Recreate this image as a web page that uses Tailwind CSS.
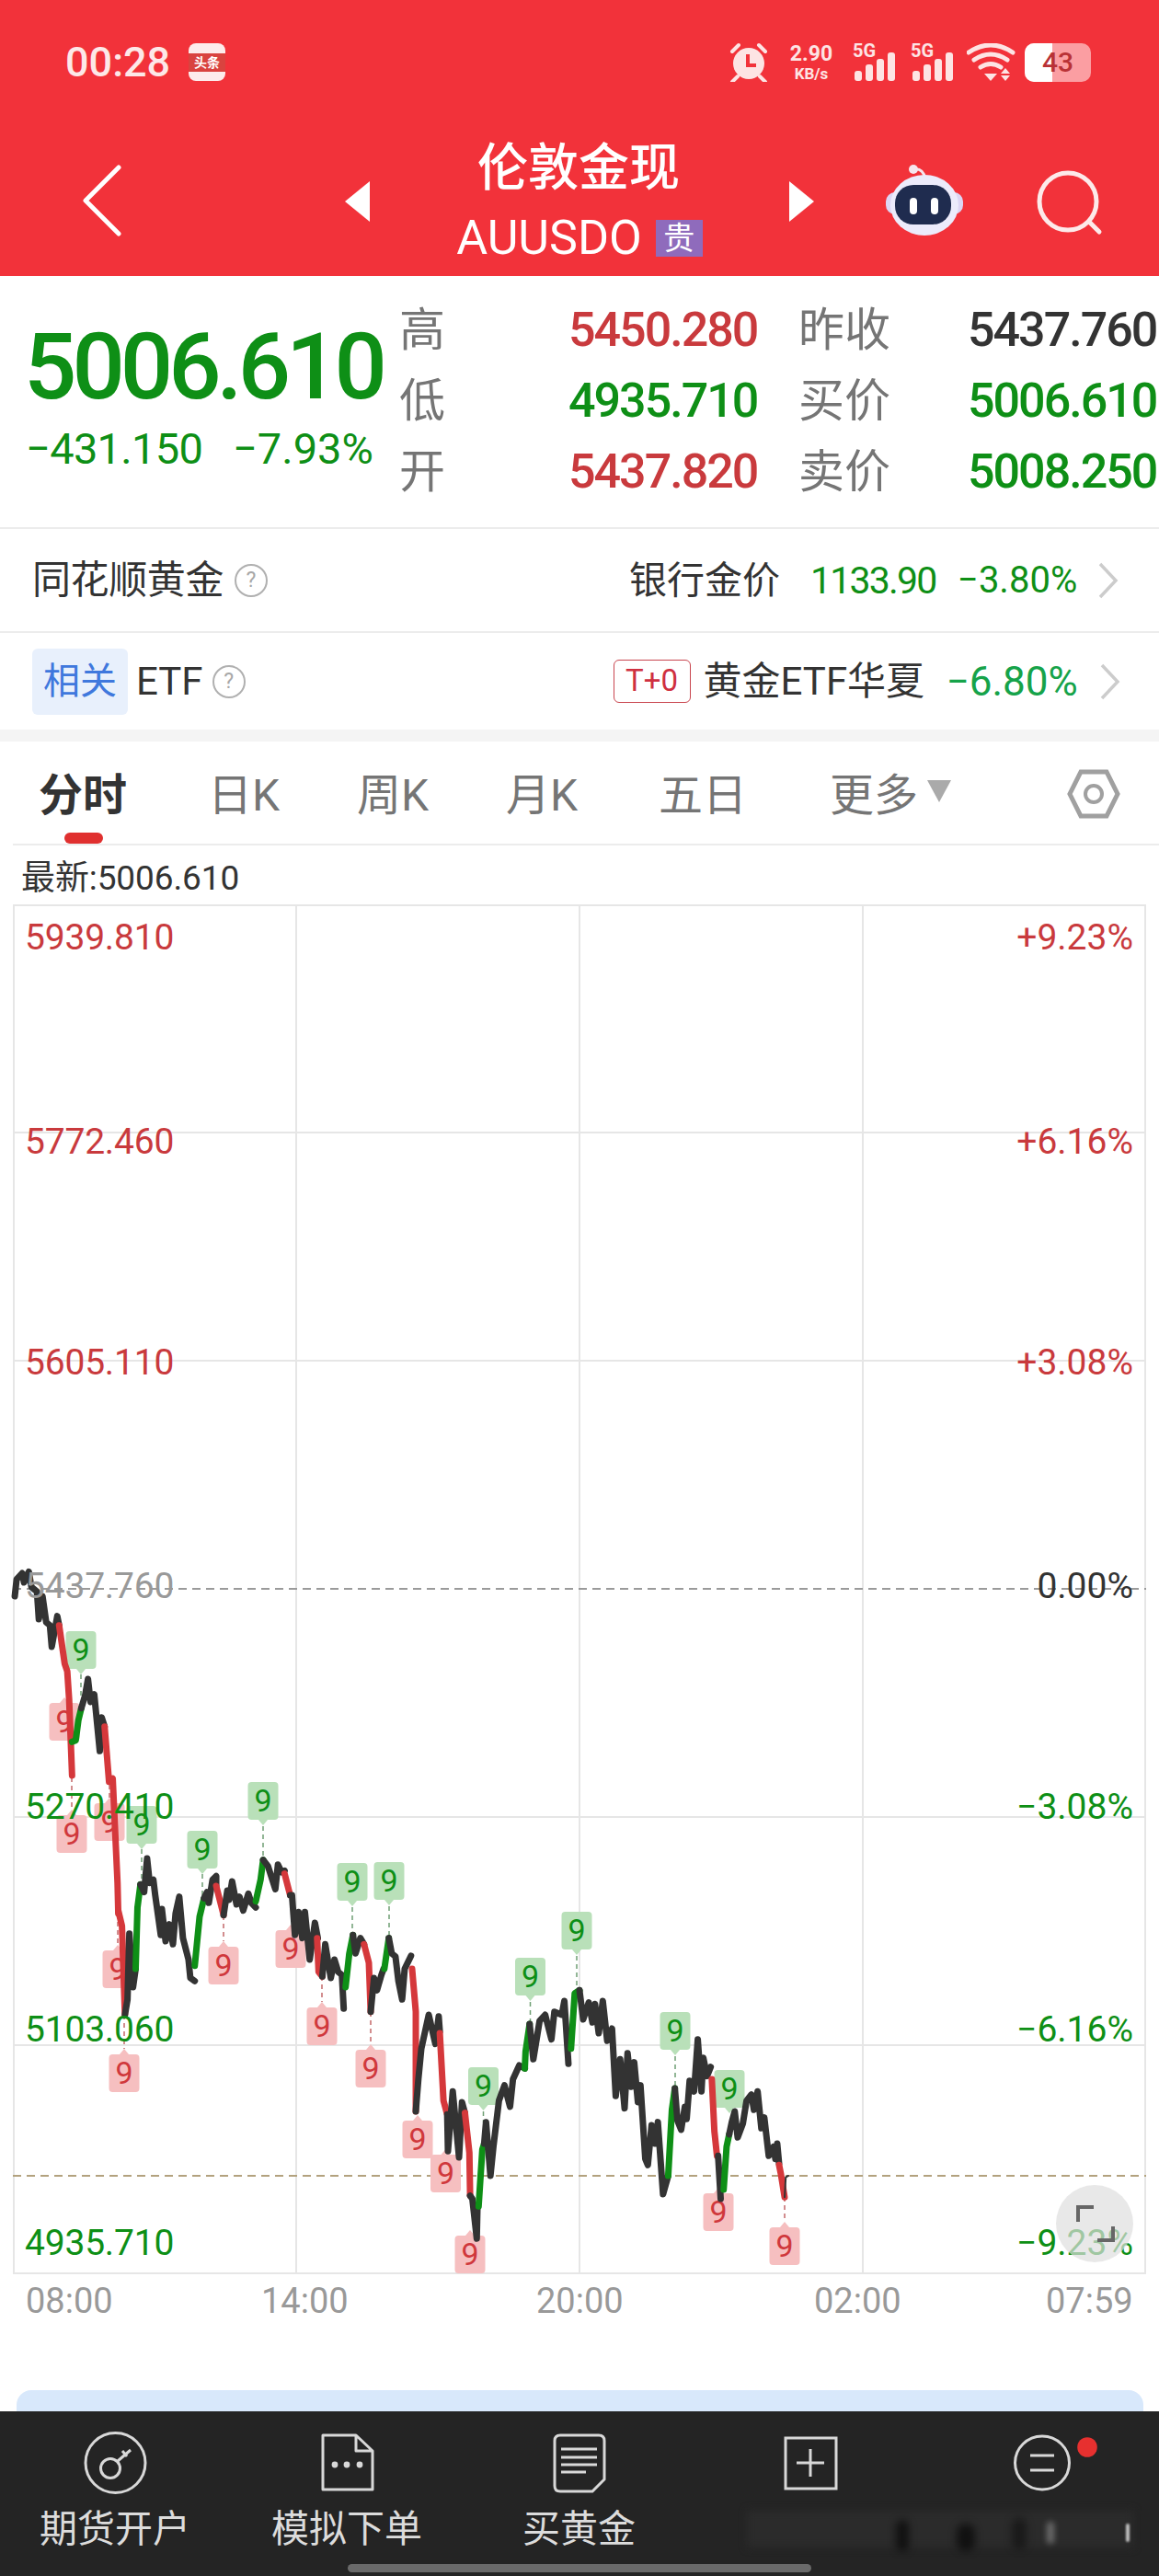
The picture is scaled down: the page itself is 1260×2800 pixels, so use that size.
<!DOCTYPE html>
<html lang="zh">
<head>
<meta charset="utf-8">
<script src="https://cdn.jsdelivr.net/npm/@tailwindcss/browser@4"></script>
<title>伦敦金现</title>
</head>
<body class="bg-white">
<div class="relative w-[1260px] h-[2800px] overflow-hidden bg-white font-['Roboto','Noto_Sans_CJK_SC',sans-serif]">

  <!-- red header -->
  <header class="h-[300px] bg-[#f2323a] text-white">
    <!-- status bar -->
    <div class="flex items-center h-[43px] relative top-[46px] pl-[71px]">
      <span class="w-[134px] text-[45px] leading-[43px] text-[#fde8e8] font-medium">00:28</span>
      <span class="flex flex-col w-[40px] h-[41px] rounded-[8px] bg-[#fdecec] justify-center overflow-hidden">
        <span class="h-[20px] bg-[#d9433f] text-[14px] leading-[20px] text-center text-white font-bold">头条</span>
      </span>
      <svg class="ml-[548px] w-[42px] h-[43px]" viewBox="0 0 42 43" fill="#fde4e4">
        <circle cx="21" cy="23" r="17"/><path d="M3 10 L10 3 M32 3 L39 10 M9 37 L3 43 M33 37 L39 43" stroke="#fde4e4" stroke-width="4" stroke-linecap="round"/>
        <path d="M20 13 V25 H29" fill="none" stroke="#f2323a" stroke-width="4"/>
      </svg>
      <span class="ml-[22px] w-[50px] flex flex-col items-center text-[#fde4e4] font-bold">
        <span class="text-[23px] leading-[24px]">2.90</span>
        <span class="text-[17px] leading-[18px]">KB/s</span>
      </span>
      <span class="relative ml-[20px] w-[47px] h-[40px]">
        <span class="absolute left-0 -top-[3px] text-[20px] leading-[20px] font-bold text-[#fde4e4]">5G</span>
        <svg class="absolute left-0 top-0" width="47" height="40" viewBox="0 0 47 40" fill="#fde4e4"><rect x="2" y="29" width="8" height="11" rx="3"/><rect x="14" y="22" width="8" height="18" rx="3"/><rect x="26" y="16" width="8" height="24" rx="3"/><rect x="38" y="9" width="8" height="31" rx="3"/></svg>
      </span>
      <span class="relative ml-[16px] w-[47px] h-[40px]">
        <span class="absolute left-0 -top-[3px] text-[20px] leading-[20px] font-bold text-[#fde4e4]">5G</span>
        <svg class="absolute left-0 top-0" width="47" height="40" viewBox="0 0 47 40" fill="#fde4e4"><rect x="2" y="29" width="8" height="11" rx="3"/><rect x="14" y="22" width="8" height="18" rx="3"/><rect x="26" y="16" width="8" height="24" rx="3"/><rect x="38" y="9" width="8" height="31" rx="3"/></svg>
      </span>
      <svg class="ml-[14px] w-[53px] h-[42px]" viewBox="0 0 53 42" fill="none" stroke="#fde4e4" stroke-linecap="round">
        <path d="M2 10 Q26 -6 50 10" stroke-width="5"/><path d="M8 18 Q26 6 44 18" stroke-width="5"/><path d="M15 26 Q26 19 37 26" stroke-width="5"/>
        <path d="M19 33 H33 L26 41Z" fill="#fde4e4" stroke="none"/><path d="M42 27 L47 33 H37Z M37 35 H47 L42 41Z" fill="#fde4e4" stroke="none"/>
      </svg>
      <span class="relative ml-[10px] w-[72px] h-[42px] rounded-[10px] bg-[#fb9ea2] overflow-hidden">
        <span class="absolute left-0 top-0 w-[30px] h-[42px] bg-white"></span>
        <span class="absolute inset-0 flex items-center justify-center text-[30px] leading-[42px] font-medium text-[#b93236]">43</span>
      </span>
    </div>
    <!-- title bar -->
    <div class="relative flex items-start h-[165px] mt-[71px] pt-[36px]">
      <svg class="absolute left-[88px] top-[64px] w-[46px] h-[80px]" viewBox="0 0 46 80" fill="none" stroke="#fff" stroke-width="5" stroke-linecap="round" stroke-linejoin="round"><path d="M41 4 L5 40 L41 76"/></svg>
      <svg class="absolute left-[375px] top-[83px] w-[27px] h-[44px]" viewBox="0 0 27 44" fill="#fff"><path d="M27 0 V44 L0 22Z"/></svg>
      <svg class="absolute left-[858px] top-[83px] w-[27px] h-[44px]" viewBox="0 0 27 44" fill="#fff"><path d="M0 0 V44 L27 22Z"/></svg>
      <div class="w-full flex flex-col items-center">
        <span class="text-[55px] leading-[64px] font-medium -ml-[2px]">伦敦金现</span>
        <span class="flex items-center mt-[25px] h-[40px]">
          <span class="text-[52px] leading-[40px]">AUUSDO</span>
          <span class="ml-[15px] w-[51px] h-[40px] bg-[#8f6bbc] text-center text-[34px] leading-[40px]">贵</span>
        </span>
      </div>
      <svg class="absolute left-[960px] top-[62px] w-[90px] h-[90px]" viewBox="960 172 90 90">
        <path d="M993 180 Q1003 178 1006 190" fill="none" stroke="#f6e6ee" stroke-width="3"/>
        <circle cx="993" cy="180" r="5" fill="#f6e6ee"/>
        <rect x="963" y="205" width="84" height="24" rx="10" fill="#dcd6f4"/>
        <ellipse cx="1005" cy="219" rx="37" ry="33" fill="#ecebfb"/>
        <rect x="973" y="197" width="61" height="43" rx="20" fill="#1f2c4f"/>
        <rect x="989" y="211" width="8" height="18" rx="4" fill="#fff"/>
        <rect x="1012" y="211" width="8" height="18" rx="4" fill="#fff"/>
      </svg>
      <svg class="absolute left-[1120px] top-[64px] w-[84px] h-[84px]" viewBox="1120 174 84 84" fill="none" stroke="#fdeaea" stroke-width="5" stroke-linecap="round"><circle cx="1161" cy="215" r="31"/><path d="M1185 238 L1195 248"/></svg>
    </div>
  </header>

  <!-- quote -->
  <section class="flex h-[273px] pt-[20px]">
    <div class="w-[434px] pl-[26px] pt-[37px] text-[#0e8f16]">
      <div class="text-[101px] leading-[84px] font-medium tracking-[-5px] whitespace-nowrap">5006.610</div>
      <div class="flex mt-[24px] pl-[2px] text-[47px] leading-[46px]">
        <span class="w-[225px] tracking-[-0.7px]">−431.150</span><span>−7.93%</span>
      </div>
    </div>
    <div class="grid grid-cols-[184px_250px_184px_207px] grid-rows-[77px_77px_77px] items-center text-[#757575] text-[50px] leading-[60px]">
      <span>高</span><span class="text-[52px] font-medium text-[#c93a3d] tracking-[-2px]">5450.280</span><span>昨收</span><span class="text-[52px] font-medium text-[#333333] tracking-[-2px]">5437.760</span>
      <span>低</span><span class="text-[52px] font-medium text-[#0e8f16] tracking-[-2px]">4935.710</span><span>买价</span><span class="text-[52px] font-medium text-[#0e8f16] tracking-[-2px]">5006.610</span>
      <span>开</span><span class="text-[52px] font-medium text-[#c93a3d] tracking-[-2px]">5437.820</span><span>卖价</span><span class="text-[52px] font-medium text-[#0e8f16] tracking-[-2px]">5008.250</span>
    </div>
  </section>

  <!-- gold row -->
  <div class="flex items-center h-[113px] pl-[35px] border-t-2 border-[#ececec] text-[#333333]">
    <span class="text-[42px] leading-[50px] tracking-[-0.4px]">同花顺黄金</span>
    <span class="ml-[12px] w-[36px] h-[36px] rounded-full border-2 border-[#b0b0b0] text-[#a8a8a8] text-[23px] leading-[32px] text-center">?</span>
    <span class="ml-[393px] text-[41px] leading-[50px]">银行金价</span>
    <span class="ml-[33px] w-[160px] text-[41px] leading-[50px] text-[#0e8f16] tracking-[-1.8px]">1133.90</span>
    <span class="w-[129px] text-[40px] leading-[50px] text-[#0e8f16] whitespace-nowrap">−3.80%</span>
    <svg class="ml-[23px] w-[24px] h-[40px]" viewBox="0 0 24 40" fill="none" stroke="#cccccc" stroke-width="3.5"><path d="M3 2 L20 20 L3 38"/></svg>
  </div>

  <!-- ETF row -->
  <div class="relative flex items-center h-[107px] pl-[35px] border-t-2 border-[#ececec] text-[#333333]">
    <span class="w-[104px] h-[72px] rounded-[6px] bg-[#e8f0fc] text-[#3f78dd] text-[40px] leading-[72px] text-center">相关</span>
    <span class="ml-[9px] text-[42px] leading-[50px]">ETF</span>
    <span class="ml-[10px] w-[36px] h-[36px] rounded-full border-2 border-[#b0b0b0] text-[#a8a8a8] text-[23px] leading-[32px] text-center">?</span>
    <span class="ml-[400px] w-[84px] h-[47px] rounded-[6px] border border-[#c9464f] text-[#cf3040] text-[33px] leading-[44px] text-center">T+0</span>
    <span class="ml-[14px] w-[264px] text-[42px] leading-[50px] whitespace-nowrap">黄金ETF华夏</span>
    <span class="w-[142px] text-[44px] leading-[50px] text-[#16a34a] whitespace-nowrap">−6.80%</span>
    <svg class="ml-[24px] w-[24px] h-[40px]" viewBox="0 0 24 40" fill="none" stroke="#cccccc" stroke-width="3.5"><path d="M3 2 L20 20 L3 38"/></svg>
  </div>

  <div class="h-[13px] bg-[#f4f4f4]"></div>

  <!-- tabs -->
  <nav class="relative flex items-center h-[113px] pt-[6px] ml-[14px] pl-[28px] border-b-2 border-[#ececec] text-[#757575] text-[48px] leading-[56px]">
    <span class="w-[184px] font-bold text-[#333333]">分时</span>
    <span class="w-[162px]">日K</span>
    <span class="w-[162px]">周K</span>
    <span class="w-[166px]">月K</span>
    <span class="w-[186px]">五日</span>
    <span class="w-[106px]">更多</span>
    <svg class="w-[26px] h-[24px] -mt-[10px]" viewBox="0 0 26 24" fill="#aaaaaa"><path d="M0 0 H26 L13 24Z"/></svg>
    <svg class="ml-[126px] w-[58px] h-[54px] -mt-[4px]" viewBox="0 0 58 54" fill="none" stroke="#a0a0a0" stroke-width="5"><path d="M15 3 H43 L55 27 L43 51 H15 L3 27Z"/><circle cx="29" cy="27" r="9" stroke-width="4"/></svg>
    <span class="absolute left-[56px] bottom-0 w-[42px] h-[12px] rounded-full bg-[#e0302f]"></span>
  </nav>

  <div class="h-[64px] pl-[23px] pt-[14px] text-[#333333] text-[37px] leading-[44px] tracking-[-0.1px]">最新:5006.610</div>

  <!-- chart -->
  <section class="relative ml-[14px] w-[1232px] h-[1489px]">
    <svg class="absolute inset-0 overflow-visible" width="1232" height="1489" viewBox="14 983 1232 1489" fill="none">
      <defs>
        <path id="gb" d="M-12.5 0 H12.5 Q16.5 0 16.5 4 V37 Q16.5 41 12.5 41 H5 L0 47 L-5 41 H-12.5 Q-16.5 41 -16.5 37 V4 Q-16.5 0 -12.5 0Z" fill="#b9e0b9"/>
        <path id="rb" d="M0 0 L5 6 H12.5 Q16.5 6 16.5 10 V43 Q16.5 47 12.5 47 H-12.5 Q-16.5 47 -16.5 43 V10 Q-16.5 6 -12.5 6 H-5Z" fill="#f6bfc0"/>
      </defs>
      <g stroke="#e6e6e6" stroke-width="2">
        <rect x="15" y="984" width="1230" height="1487"/>
        <path d="M322 983 V2472 M630 983 V2472 M938 983 V2472 M14 1231 H1246 M14 1479 H1246 M14 1975 H1246 M14 2223 H1246"/>
      </g>
      <path d="M14 1727 H1246" stroke="#9a9a9a" stroke-width="2" stroke-dasharray="9 6"/>
      <path d="M14 2365 H1246" stroke="#b3a27e" stroke-width="2" stroke-dasharray="9 6"/>

      <!-- stems -->
      <g stroke="#6f9f74" stroke-width="1.5" stroke-dasharray="5 4">
        <path d="M88 1820 V1845 M154 2010 V2047 M220 2037 V2063 M286 1985 V2022 M383 2073 V2103 M423 2072 V2107 M525.5 2295 V2307 M576.5 2176 V2200 M627 2126 V2163 M734 2235 V2270"/>
      </g>
      <g stroke="#c4686a" stroke-width="1.5" stroke-dasharray="5 4">
        <path d="M78 1932 V1967 M119 1940 V1954 M128 2080 V2114 M135 2190 V2227 M243 2082 V2110 M350 2148 V2176 M403 2187 V2222 M853 2388 V2415"/>
      </g>

      <!-- red badges -->
      <g class="font-['Roboto',sans-serif]" font-size="34" text-anchor="middle">
        <g transform="translate(70,1845)"><use href="#rb"/><text y="38" fill="#d0383c">9</text></g>
        <g transform="translate(78,1967)"><use href="#rb"/><text y="38" fill="#d0383c">9</text></g>
        <g transform="translate(119,1954)"><use href="#rb"/><text y="38" fill="#d0383c">9</text></g>
        <g transform="translate(128,2114)"><use href="#rb"/><text y="38" fill="#d0383c">9</text></g>
        <g transform="translate(135,2227)"><use href="#rb"/><text y="38" fill="#d0383c">9</text></g>
        <g transform="translate(243,2110)"><use href="#rb"/><text y="38" fill="#d0383c">9</text></g>
        <g transform="translate(316,2092)"><use href="#rb"/><text y="38" fill="#d0383c">9</text></g>
        <g transform="translate(350,2176)"><use href="#rb"/><text y="38" fill="#d0383c">9</text></g>
        <g transform="translate(403,2222)"><use href="#rb"/><text y="38" fill="#d0383c">9</text></g>
        <g transform="translate(454,2299)"><use href="#rb"/><text y="38" fill="#d0383c">9</text></g>
        <g transform="translate(484.5,2336)"><use href="#rb"/><text y="38" fill="#d0383c">9</text></g>
        <g transform="translate(511,2424)"><use href="#rb"/><text y="38" fill="#d0383c">9</text></g>
        <g transform="translate(781,2378)"><use href="#rb"/><text y="38" fill="#d0383c">9</text></g>
        <g transform="translate(853,2415)"><use href="#rb"/><text y="38" fill="#d0383c">9</text></g>
        <!-- green badges -->
        <g transform="translate(88,1773)"><use href="#gb"/><text y="32" fill="#0e8f16">9</text></g>
        <g transform="translate(154,1963)"><use href="#gb"/><text y="32" fill="#0e8f16">9</text></g>
        <g transform="translate(220,1990)"><use href="#gb"/><text y="32" fill="#0e8f16">9</text></g>
        <g transform="translate(286,1937)"><use href="#gb"/><text y="32" fill="#0e8f16">9</text></g>
        <g transform="translate(383,2025)"><use href="#gb"/><text y="32" fill="#0e8f16">9</text></g>
        <g transform="translate(423,2024)"><use href="#gb"/><text y="32" fill="#0e8f16">9</text></g>
        <g transform="translate(525.5,2247)"><use href="#gb"/><text y="32" fill="#0e8f16">9</text></g>
        <g transform="translate(576.5,2128)"><use href="#gb"/><text y="32" fill="#0e8f16">9</text></g>
        <g transform="translate(627,2078)"><use href="#gb"/><text y="32" fill="#0e8f16">9</text></g>
        <g transform="translate(734,2187)"><use href="#gb"/><text y="32" fill="#0e8f16">9</text></g>
        <g transform="translate(793,2250)"><use href="#gb"/><text y="32" fill="#0e8f16">9</text></g>
      </g>

      <!-- price line -->
      <g fill="none" stroke-width="7" stroke-linejoin="round" stroke-linecap="round">
        <g transform="translate(0,1680) scale(0.4018,0.3333)">
          <polyline vector-effect="non-scaling-stroke" stroke="#333333" points="40,165 45,110 60,90 65,120 78,85 85,135 100,150 105,240 115,165 125,250 135,260 140,330 155,230 160,260"/>
          <polyline vector-effect="non-scaling-stroke" stroke="#d5383b" points="160,260 175,385 182,410 187,500 195,750"/>
          <polyline vector-effect="non-scaling-stroke" stroke="#0e8f16" points="195,640 205,635 212,570 220,530"/>
          <polyline vector-effect="non-scaling-stroke" stroke="#333333" points="220,530 230,490 238,435 245,510 255,485 270,670 275,560 283,590"/>
          <polyline vector-effect="non-scaling-stroke" stroke="#d5383b" points="283,590 295,770 305,760 318,1100 320,1200"/>
        </g>
        <g transform="translate(0,2000) scale(0.4018,0.3333)">
          <polyline vector-effect="non-scaling-stroke" stroke="#d5383b" points="320,230 330,280 338,570"/>
          <polyline vector-effect="non-scaling-stroke" stroke="#333333" points="338,570 345,520 350,305 360,480 367,420"/>
          <polyline vector-effect="non-scaling-stroke" stroke="#0e8f16" points="367,420 372,220 380,145"/>
          <polyline vector-effect="non-scaling-stroke" stroke="#333333" points="380,145 390,170 398,60 405,140 415,130 420,180 435,310 438,225 448,330 458,275 468,340 475,240 485,185 495,320 510,390 515,450 527,460"/>
          <polyline vector-effect="non-scaling-stroke" stroke="#0e8f16" points="527,410 540,250 552,190"/>
          <polyline vector-effect="non-scaling-stroke" stroke="#333333" points="552,190 560,170 565,205 575,130 585,118 585,150"/>
          <polyline vector-effect="non-scaling-stroke" stroke="#d5383b" points="585,150 605,245"/>
          <polyline vector-effect="non-scaling-stroke" stroke="#333333" points="605,245 615,165 620,195 628,135 640,210 648,185 658,230 672,175 680,205 692,220"/>
          <polyline vector-effect="non-scaling-stroke" stroke="#0e8f16" points="692,200 705,130 712,65"/>
          <polyline vector-effect="non-scaling-stroke" stroke="#333333" points="712,65 725,85 745,160 752,80 762,105 770,100"/>
          <polyline vector-effect="non-scaling-stroke" stroke="#d5383b" points="770,110 785,180"/>
          <polyline vector-effect="non-scaling-stroke" stroke="#333333" points="785,180 790,180 798,310 808,235 818,320 825,235 838,390 852,270 860,320"/>
          <polyline vector-effect="non-scaling-stroke" stroke="#d5383b" points="858,320 862,430 872,445"/>
          <polyline vector-effect="non-scaling-stroke" stroke="#333333" points="872,445 880,340 895,450 905,390 915,430 925,440 930,550"/>
          <polyline vector-effect="non-scaling-stroke" stroke="#0e8f16" points="935,480 945,370 955,310"/>
          <polyline vector-effect="non-scaling-stroke" stroke="#333333" points="955,310 962,370 975,320 985,340"/>
          <polyline vector-effect="non-scaling-stroke" stroke="#d5383b" points="985,340 998,400 1003,560"/>
          <polyline vector-effect="non-scaling-stroke" stroke="#333333" points="1003,560 1012,450 1020,490 1032,440 1038,420"/>
          <polyline vector-effect="non-scaling-stroke" stroke="#0e8f16" points="1040,420 1052,320"/>
          <polyline vector-effect="non-scaling-stroke" stroke="#333333" points="1052,320 1060,370 1070,380 1078,460 1088,520 1095,420 1112,378"/>
          <polyline vector-effect="non-scaling-stroke" stroke="#d5383b" points="1115,420 1125,560 1125,885"/>
          <polyline vector-effect="non-scaling-stroke" stroke="#333333" points="1125,885 1132,780 1140,680 1160,570 1178,665 1187,575 1190,625"/>
          <polyline vector-effect="non-scaling-stroke" stroke="#d5383b" points="1190,630 1200,850 1210,895"/>
          <polyline vector-effect="non-scaling-stroke" stroke="#333333" points="1210,895 1212,1015 1225,820 1242,1035 1250,855 1258,890"/>
          <polyline vector-effect="non-scaling-stroke" stroke="#d5383b" points="1258,890 1270,1020 1272,1160"/>
          <polyline vector-effect="non-scaling-stroke" stroke="#333333" points="1272,1160 1278,1170 1290,1300 1292,1190"/>
          <polyline vector-effect="non-scaling-stroke" stroke="#0e8f16" points="1295,1195 1305,1010 1310,990"/>
          <polyline vector-effect="non-scaling-stroke" stroke="#333333" points="1310,990 1315,920 1327,1095 1335,1000 1350,850 1365,800 1380,870 1388,780 1405,735 1420,745"/>
          <polyline vector-effect="non-scaling-stroke" stroke="#0e8f16" points="1420,745 1422,690 1433,600"/>
          <polyline vector-effect="non-scaling-stroke" stroke="#333333" points="1433,600 1443,715 1460,590 1475,570 1492,650 1500,560 1520,570 1527,525 1538,730"/>
          <polyline vector-effect="non-scaling-stroke" stroke="#0e8f16" points="1545,680 1555,500 1568,490"/>
        </g>
        <g transform="translate(630,2000) scale(0.4018,0.3333)">
          <polyline vector-effect="non-scaling-stroke" stroke="#333333" points="0,490 10,585 25,530 35,595 42,535 52,630 63,525 75,655 88,615 98,835 110,715 122,875 130,695 140,805 148,725 158,855 165,800 178,1040 185,1060 195,930 205,990 212,920 226,1155 240,1095"/>
          <polyline vector-effect="non-scaling-stroke" stroke="#0e8f16" points="240,1095 250,880 258,810"/>
          <polyline vector-effect="non-scaling-stroke" stroke="#333333" points="258,810 265,915 275,945 285,870 290,910 298,785 310,820 320,650 330,820 335,710 345,770 355,740"/>
          <polyline vector-effect="non-scaling-stroke" stroke="#d5383b" points="358,780 365,950 372,1030"/>
          <polyline vector-effect="non-scaling-stroke" stroke="#333333" points="375,1030 382,1170"/>
          <polyline vector-effect="non-scaling-stroke" stroke="#0e8f16" points="390,1140 398,1000 405,960"/>
          <polyline vector-effect="non-scaling-stroke" stroke="#333333" points="405,960 412,920 420,885 428,970 442,925 452,850 465,830 472,880 482,820 492,940 500,905 512,1030 525,1000 530,1040 535,990 540,1055"/>
          <polyline vector-effect="non-scaling-stroke" stroke="#d5383b" points="540,1060 545,1090 555,1165"/>
          <polyline vector-effect="non-scaling-stroke" stroke="#333333" stroke-width="2" points="555,1165 558,1100 565,1095"/>
        </g>
      </g>
    </svg>

    <!-- axis labels over the plot -->
    <div class="absolute left-[13px] top-0 h-full text-[39px] leading-[48px] tracking-[-0.2px]">
      <span class="absolute top-[12px] text-[#c93a3d]">5939.810</span>
      <span class="absolute top-[234px] text-[#c93a3d]">5772.460</span>
      <span class="absolute top-[474px] text-[#c93a3d]">5605.110</span>
      <span class="absolute top-[717px] text-[#999999]">5437.760</span>
      <span class="absolute top-[957px] text-[#0e8f16]">5270.410</span>
      <span class="absolute top-[1199px] text-[#0e8f16]">5103.060</span>
      <span class="absolute top-[1431px] text-[#0e8f16]">4935.710</span>
    </div>
    <div class="absolute right-[14px] top-0 h-full text-[39px] leading-[48px]">
      <span class="absolute right-0 top-[12px] text-[#c93a3d]">+9.23%</span>
      <span class="absolute right-0 top-[234px] text-[#c93a3d]">+6.16%</span>
      <span class="absolute right-0 top-[474px] text-[#c93a3d]">+3.08%</span>
      <span class="absolute right-0 top-[717px] text-[#333333]">0.00%</span>
      <span class="absolute right-0 top-[957px] text-[#0e8f16]">−3.08%</span>
      <span class="absolute right-0 top-[1199px] text-[#0e8f16]">−6.16%</span>
      <span class="absolute right-0 top-[1431px] text-[#0e8f16]">−9.23%</span>
    </div>

    <!-- expand button -->
    <svg class="absolute left-[1134px] top-[1392px] w-[84px] h-[84px]" viewBox="1148 2375 84 84" fill="none">
      <circle cx="1190" cy="2417" r="42" fill="#dedede" fill-opacity="0.7"/>
      <path d="M1189 2399 H1172 V2415 M1193 2435 H1210 V2420" stroke="#666666" stroke-width="4"/>
    </svg>
  </section>

  <!-- time axis -->
  <div class="flex h-[58px] pl-[28px] pt-[6px] text-[#999999] text-[38px] leading-[46px]">
    <span class="w-[256px]">08:00</span><span class="w-[299px]">14:00</span><span class="w-[302px]">20:00</span><span class="w-[252px]">02:00</span><span>07:59</span>
  </div>

  <div class="h-[68px]"></div>

  <!-- blue banner peeking under the toolbar -->
  <div class="ml-[18px] w-[1225px] h-[23px] rounded-t-[16px] bg-[#d8e8fb]"></div>

  <!-- bottom toolbar -->
  <footer class="relative h-[179px] bg-[#242424] text-[#dcdcdc]">
    <svg class="absolute left-0 top-0" width="1260" height="100" viewBox="0 2621 1260 100" fill="none" stroke="#d8d8d8" stroke-width="3">
      <circle cx="125.5" cy="2677" r="32.5"/>
      <circle cx="120" cy="2683" r="10.5"/><path d="M128 2675 L142 2663 M133 2664 L138 2670"/>
      <path d="M351 2647 H387 L405 2664 V2706 H351Z M387 2647 V2664 H405" stroke-linejoin="round"/>
      <g fill="#d8d8d8" stroke="none"><circle cx="364" cy="2679" r="3.4"/><circle cx="377" cy="2679" r="3.4"/><circle cx="391" cy="2679" r="3.4"/></g>
      <path d="M609 2647 H651 Q657 2647 657 2653 V2695 L644 2708 H609 Q603 2708 603 2702 V2653 Q603 2647 609 2647Z"/>
      <path d="M610 2662 H649 M610 2671 H649 M610 2679 H649 M610 2687 H637"/>
      <rect x="854" y="2650" width="55" height="55"/>
      <path d="M866 2677 H896 M881 2662 V2692"/>
      <ellipse cx="1133" cy="2677" rx="29.5" ry="29"/>
      <path d="M1120 2669 H1146 M1120 2685 H1146"/>
      <circle cx="1182" cy="2660" r="10.8" fill="#e7302f" stroke="none"/>
    </svg>
    <span class="absolute left-[43px] top-[103px] text-[41px] leading-[50px]">期货开户</span>
    <span class="absolute left-[295px] top-[103px] text-[41px] leading-[50px]">模拟下单</span>
    <span class="absolute left-[568px] top-[103px] text-[41px] leading-[50px]">买黄金</span>
    <div class="absolute left-[812px] top-[108px] w-[420px] h-[40px] bg-[#2b2b2b] blur-[4px]"></div>
    <div class="absolute left-[974px] top-[118px] w-[14px] h-[34px] rounded-full bg-black/60 blur-[4px]"></div>
    <div class="absolute left-[1040px] top-[122px] w-[20px] h-[30px] rounded-full bg-black/60 blur-[4px]"></div>
    <div class="absolute left-[1100px] top-[116px] w-[16px] h-[34px] rounded-full bg-black/40 blur-[4px]"></div>
    <div class="absolute left-[1138px] top-[120px] w-[8px] h-[24px] rounded-full bg-white/30 blur-[3px]"></div>
    <div class="absolute left-[1224px] top-[122px] w-[4px] h-[20px] rounded-full bg-white/70 blur-[1px]"></div>
    <div class="absolute left-[378px] top-[166px] w-[504px] h-[9px] rounded-full bg-[#6a6a6a]"></div>
  </footer>
</div>
</body>
</html>
